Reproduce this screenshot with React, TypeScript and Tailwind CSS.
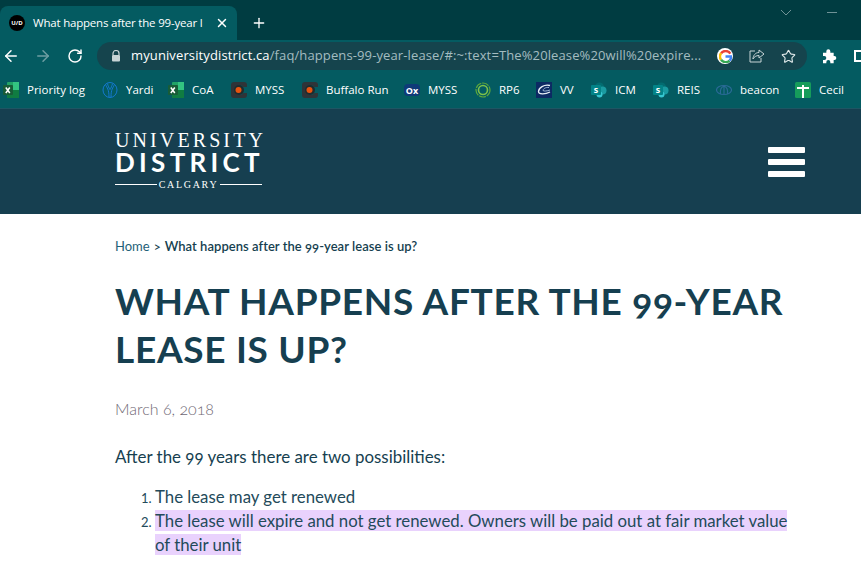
import { ArrowLeft, ArrowRight, Plus, RotateCw, Star, X } from 'lucide-react'

const ui = 'font-["Open_Sans","Noto_Sans",sans-serif]'

// ---- small bookmark icons ----

function ExcelIcon() {
  return (
    <svg width="16" height="16" viewBox="0 0 16 16">
      <rect x="4" y="0" width="12" height="16" rx="1" fill="#21a366" />
      <rect x="4" y="8" width="12" height="8" fill="#107c41" />
      <rect x="10" y="0" width="6" height="8" fill="#33c481" />
      <rect x="0" y="3" width="10" height="10" rx="1" fill="#185c37" />
      <path d="M2.800 5.500l4 5.500M6.800 5.500l-4 5.500" stroke="#fff" strokeWidth="1.500" />
    </svg>
  )
}

function YardiIcon() {
  return (
    <svg width="16" height="16" viewBox="0 0 16 16" fill="none" stroke="#1479cf" strokeWidth="1">
      <ellipse cx="8" cy="8" rx="7" ry="7.500" />
      <path d="M3.500 2.500C5 6 7 7 7 15M12.500 2.500C11 6 9 7 9 15M5.500 1.500C6 4 7 6 8 7.500M10.500 1.500C10 4 9 6 8 7.500" />
    </svg>
  )
}

function CircleC() {
  return (
    <svg width="16" height="16" viewBox="0 0 16 16">
      <path d="M3 0H13A3 3 0 0 1 16 3V5H12.500A5 5 0 1 0 12.500 11H16V13A3 3 0 0 1 13 16H3A3 3 0 0 1 0 13V3A3 3 0 0 1 3 0Z" fill="#2f3438" />
      <circle cx="8" cy="8" r="5" fill="#1f2b2e" />
      <circle cx="7.500" cy="8" r="3" fill="#e8540f" />
    </svg>
  )
}

function OxIcon() {
  return (
    <div className="flex h-3 w-4 items-center justify-center rounded-sm bg-[#0f3a78] text-[9px] font-bold leading-none text-white">Ox</div>
  )
}

function RingIcon() {
  return (
    <svg width="16" height="16" viewBox="0 0 16 16" fill="none">
      <circle cx="8" cy="8" r="7" stroke="#5fa83a" strokeWidth="1.200" strokeDasharray="7 1" />
      <circle cx="8" cy="8" r="4.500" stroke="#7cc04a" strokeWidth="1.600" />
    </svg>
  )
}

function VvIcon() {
  return (
    <svg width="16" height="16" viewBox="0 0 16 16" fill="none">
      <rect width="16" height="16" fill="#0c2a63" />
      <path d="M14 3.500C8 2 2.500 6 2.500 9.500C2.500 12.500 9 12.500 14 10" stroke="#e6edf5" strokeWidth="1.300" />
      <path d="M13 5.500C9.500 5 7 7 7 8.500C8 9.500 11 9 14 8" stroke="#9fb6d4" strokeWidth="1" />
    </svg>
  )
}

function SharePointIcon() {
  return (
    <svg width="16" height="16" viewBox="0 0 16 16">
      <circle cx="8.500" cy="5" r="4.500" fill="#036c70" />
      <circle cx="11.500" cy="8.500" r="4" fill="#1a9ba1" />
      <circle cx="8.500" cy="12.500" r="3" fill="#37c6d0" />
      <rect x="0" y="3" width="10" height="10" rx="1" fill="#038387" />
      <text x="5" y="11" textAnchor="middle" fontSize="9" fontWeight="700" fill="#fff" fontFamily="Open Sans, sans-serif">s</text>
    </svg>
  )
}

function BeaconIcon() {
  return (
    <svg width="16" height="16" viewBox="0 0 16 16" fill="none" stroke="#2a6a96" strokeWidth="1.200">
      <ellipse cx="8" cy="8" rx="7.500" ry="4.500" />
      <path d="M8 4V12.500M8 4C5 5 4 8 4.500 12M8 4C11 5 12 8 11.500 12" />
    </svg>
  )
}

function CecilIcon() {
  return (
    <svg width="16" height="16" viewBox="0 0 16 16">
      <rect width="16" height="16" rx="1.500" fill="#169c5b" />
      <path d="M8 3V16M2 6H14" stroke="#fff" strokeWidth="2" />
    </svg>
  )
}

const bookmarks = [
  { label: 'Priority log', icon: <ExcelIcon />, width: 'w-[99px]' },
  { label: 'Yardi', icon: <YardiIcon />, width: 'w-[66px]' },
  { label: 'CoA', icon: <ExcelIcon />, width: 'w-[63px]' },
  { label: 'MYSS', icon: <CircleC />, width: 'w-[71px]' },
  { label: 'Buffalo Run', icon: <CircleC />, width: 'w-[102px]' },
  { label: 'MYSS', icon: <OxIcon />, width: 'w-[71px]' },
  { label: 'RP6', icon: <RingIcon />, width: 'w-[61px]' },
  { label: 'VV', icon: <VvIcon />, width: 'w-[55px]' },
  { label: 'ICM', icon: <SharePointIcon />, width: 'w-[62px]' },
  { label: 'REIS', icon: <SharePointIcon />, width: 'w-[63px]' },
  { label: 'beacon', icon: <BeaconIcon />, width: 'w-[79px]' },
  { label: 'Cecil', icon: <CecilIcon />, width: 'w-[60px]' },
]

function BrowserChrome() {
  return (
    <div className={ui}>
      <div className="relative flex h-10 items-end bg-[#003c41]">
        <div className="flex h-[34px] w-[237px] items-center rounded-t-lg bg-[#045b61] pl-[9px] pr-2">
          <div className="flex h-4 w-4 shrink-0 items-center justify-center rounded-full bg-black text-[6px] font-bold text-white">U/D</div>
          <div className="ml-2 w-[176px] whitespace-nowrap text-[11.500px] tracking-[-0.200px] text-white">
            What happens after the 99-year l
          </div>
          <X size={14} strokeWidth={2.500} className="ml-auto text-white" />
        </div>
        <Plus size={16} strokeWidth={2} className="mb-[9px] ml-[14px] text-white" />
        <svg width="12" height="7" viewBox="0 0 12 7" className="absolute left-[780px] top-[9px]" fill="none" stroke="#6f9296">
          <path d="M1 1l5 5 5-5" />
        </svg>
        <div className="absolute left-[827px] top-3 h-px w-[10px] bg-[#6f9296]" />
      </div>

      <div className="flex h-8 items-center bg-[#045b61]">
        <ArrowLeft size={18} strokeWidth={2} className="ml-[2px] shrink-0 text-white" />
        <ArrowRight size={18} strokeWidth={2} className="ml-[14px] shrink-0 text-[#6d9ea2]" />
        <RotateCw size={16} strokeWidth={2.200} className="ml-[15px] shrink-0 text-white" />
        <div className="ml-[14px] flex h-7 w-[710px] shrink-0 items-center rounded-full bg-[#15444d] pl-[14px]">
          <svg width="10" height="12" viewBox="0 0 10 12" className="shrink-0">
            <path d="M2 5V3.500a3 3 0 0 1 6 0V5" fill="none" stroke="#c8d4d6" strokeWidth="1.200" />
            <rect x="1" y="5" width="8" height="6.500" rx="1" fill="#c8d4d6" />
          </svg>
          <div className="ml-[10px] w-[573px] whitespace-nowrap text-[13px] tracking-[0.120px] text-[#a4bcc0]">
            <span className="text-white">myuniversitydistrict.ca</span>/faq/happens-99-year-lease/#:~:text=The%20lease%20will%20expire...
          </div>
          <div className="ml-[13px] flex h-[16px] w-[16px] shrink-0 items-center justify-center rounded-full bg-white">
            <svg width="13" height="13" viewBox="0 0 16 16" fill="none" strokeWidth="3">
              <path d="M14 4.500A7 7 0 0 0 2.500 4" stroke="#ea4335" />
              <path d="M2.500 4A7 7 0 0 0 2.500 12" stroke="#fbbc05" />
              <path d="M2.500 12A7 7 0 0 0 13 13" stroke="#34a853" />
              <path d="M13 13A7 7 0 0 0 15 8H8" stroke="#4285f4" />
            </svg>
          </div>
          <svg width="16" height="14" viewBox="0 0 16 14" fill="none" stroke="#c8d4d6" strokeWidth="1" className="ml-4 shrink-0">
            <path d="M6 2H1V13H12V9" />
            <path d="M10 1l5 4-5 4V6.500C7 6.500 5 8 4 10C4 6.500 6.500 3.500 10 3.500Z" />
          </svg>
          <Star size={15} strokeWidth={1.800} className="ml-4 shrink-0 text-[#dfe8e9]" />
        </div>
        <svg width="16" height="16" viewBox="0 0 24 24" fill="#fff" className="ml-[14px] shrink-0">
          <path d="M3 7h5V5a3 3 0 0 1 6 0v2h5v5h1a3 3 0 0 1 0 6h-1v5h-5v-2a3 3 0 0 0-6 0v2H3v-5h2a3 3 0 0 0 0-6H3Z" />
        </svg>
        <div className="ml-[17px] h-3 w-[10px] shrink-0 border-2 border-r-0 border-white" />
      </div>

      <div className="flex h-9 items-center overflow-hidden bg-[#045b61] pl-[3px]">
        {bookmarks.map((b, i) => (
          <div key={i} className={`flex shrink-0 items-center gap-2 ${b.width}`}>
            {b.icon}
            <span className="whitespace-nowrap text-[11.500px] text-white">{b.label}</span>
          </div>
        ))}
      </div>
    </div>
  )
}

function SiteHeader() {
  return (
    <header className="flex h-[106px] items-center justify-between border-t border-[#1e5563] bg-[#163f50] pl-[115px] pr-[56px]">
      <div className="w-[147px] text-white">
        <div className='whitespace-nowrap font-["Liberation_Serif",serif] text-[20px] leading-[20px] tracking-[3.100px]'>UNIVERSITY</div>
        <div className='whitespace-nowrap font-["Lato",sans-serif] text-[26px] font-bold leading-[24px] tracking-[4.300px]'>DISTRICT</div>
        <div className="mb-[3px] mt-[5px] flex items-center">
          <div className="h-px flex-1 bg-white" />
          <span className='mx-[2px] font-["Liberation_Serif",serif] text-[10px] leading-[12px] tracking-[1.700px]'>CALGARY</span>
          <div className="h-px flex-1 bg-white" />
        </div>
      </div>
      <div className="flex w-[37px] flex-col gap-[6px]">
        <div className="h-[6px] rounded-[1px] bg-white" />
        <div className="h-[6px] rounded-[1px] bg-white" />
        <div className="h-[6px] rounded-[1px] bg-white" />
      </div>
    </header>
  )
}

function Article() {
  return (
    <main className='bg-white pl-[115px] pr-[60px] font-["Lato",sans-serif] text-[#163f50] [font-variant-numeric:oldstyle-nums]'>
      <nav className="flex items-center pt-[24px] text-[13px] leading-4">
        <span className="text-[#1f5f78]">Home</span>
        <span className="mx-[4px]">&gt;</span>
        <span className="font-semibold tracking-[0.040px]">What happens after the 99-year lease is up?</span>
      </nav>
      <h1 className="mt-[23px] whitespace-nowrap text-[37px] font-bold uppercase leading-[48px] tracking-[0.700px]">
        What happens after the 99-year<br />lease is up?
      </h1>
      <p className="mt-[24px] text-[16px] font-light leading-6 text-[#6f6874]">March 6, 2018</p>
      <p className="mt-[24px] text-[16.900px] leading-6">After the 99 years there are two possibilities:</p>
      <ol className="mt-[16px] list-decimal pl-10 text-[16.800px] leading-6 text-[#234a5a] marker:text-[13px]">
        <li>The lease may get renewed</li>
        <li>
          <mark className="bg-[#e9d2fd] text-[#234a5a]">
            The lease will expire and not get renewed. Owners will be paid out at fair market value of their unit
          </mark>
        </li>
      </ol>
    </main>
  )
}

export default function App() {
  return (
    <div className="relative h-[583px] w-[861px] overflow-hidden bg-white">
      <BrowserChrome />
      <SiteHeader />
      <Article />
    </div>
  )
}
